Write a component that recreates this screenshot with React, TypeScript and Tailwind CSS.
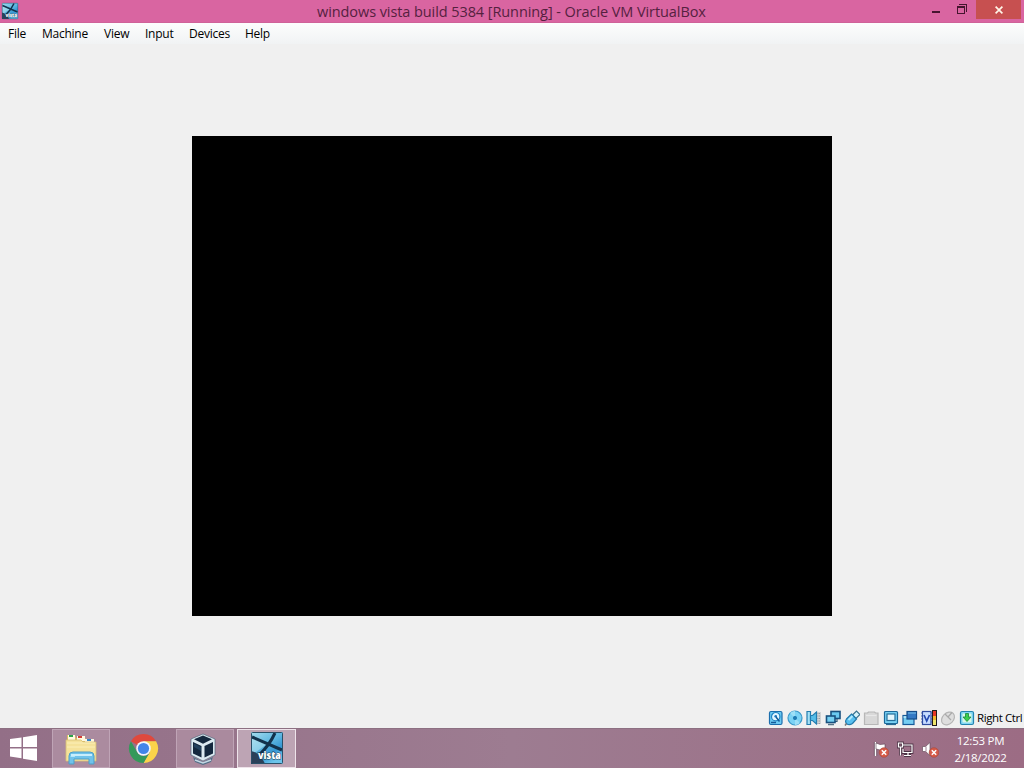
import type { ReactNode } from 'react';

const menuItems = [
  { label: 'File', width: 'w-[34px]' },
  { label: 'Machine', width: 'w-[62px]' },
  { label: 'View', width: 'w-[41px]' },
  { label: 'Input', width: 'w-[44px]' },
  { label: 'Devices', width: 'w-[56px]' },
  { label: 'Help', width: 'w-[40px]' },
];

function VistaIcon({ className }: { className: string }) {
  return (
    <svg viewBox="0 0 32 32" overflow="visible" className={className}>
      <defs>
        <linearGradient id="vista" x1="0" y1="0" x2="0.6" y2="1">
          <stop offset="0" stopColor="#a5dcee" />
          <stop offset="0.45" stopColor="#62b9e2" />
          <stop offset="0.75" stopColor="#3596d2" />
          <stop offset="1" stopColor="#6cc4ea" />
        </linearGradient>
      </defs>
      <rect width="32" height="32" rx="1" fill="url(#vista)" />
      <path d="M1 6L16 12L5 20H1Z" fill="#cdeff5" opacity=".45" />
      <path d="M0 19C6 20 11 25 14 32H0Z" fill="#2a4059" />
      <path d="M1 5L31 18M24 1Q18 14 8 23" stroke="#12314c" strokeWidth="3" fill="none" />
      <rect x=".5" y=".5" width="31" height="31" rx="1" fill="none" stroke="#294f68" />
      <text x="7" y="27" fontFamily="Open Sans, sans-serif" fontSize="10" fontWeight="800" fill="white" stroke="#173148" strokeWidth="1" paintOrder="stroke" textLength="23" lengthAdjust="spacingAndGlyphs">
        vista
      </text>
    </svg>
  );
}

function TitleBar() {
  return (
    <header className="flex h-[23px] items-start border-b border-[#cf6299] bg-[#d965a1]">
      <div className="flex w-[120px] pl-[2px] pt-[3px]">
        <VistaIcon className="h-4 w-4" />
      </div>
      <h1 className="flex-1 whitespace-nowrap pl-[197px] text-[14.5px] leading-[23px] tracking-[-0.08px] text-[#55213f]">
        windows vista build 5384 [Running] - Oracle VM VirtualBox
      </h1>
      <svg viewBox="0 0 48 20" className="h-5 w-12 shrink-0" shapeRendering="crispEdges">
        <path d="M4 11h8v2H4z" fill="#46152f" />
        <path d="M29.5 6.5h7v7h-7zM31 4.5h7.5v7.5" fill="none" stroke="#46152f" />
        <path d="M29 6h8v2h-8z" fill="#46152f" />
      </svg>
      <button type="button" aria-label="Close" className="mr-[3px] flex h-[19px] w-[45px] shrink-0 items-center justify-center bg-[#c75050]">
        <svg viewBox="0 0 8 8" className="h-2 w-2">
          <path d="M.6.6l6.8 6.8M7.4.6L.6 7.4" stroke="#fff6e8" strokeWidth="1.7" />
        </svg>
      </button>
    </header>
  );
}

function StatusIcon({ children }: { children: ReactNode }) {
  return (
    <svg viewBox="0 0 16 16" className="h-4 w-4 shrink-0" strokeWidth="1.2">
      {children}
    </svg>
  );
}

function StatusBar() {
  return (
    <div className="flex h-[20px] items-center gap-[3.1px] pl-[768px]">
      <StatusIcon>
        <rect x="1.5" y="1.5" width="12.5" height="13" rx="1.5" fill="#6ccaf3" stroke="#1b6ead" />
        <circle cx="7.7" cy="6.7" r="4.2" fill="#e3f6ff" stroke="#2386c4" />
        <circle cx="7.7" cy="6.2" r="1.3" fill="#1b76bd" />
        <path d="M8 7l3.5 4.5M3 12.5h5" stroke="#155b98" strokeWidth="1.5" />
      </StatusIcon>
      <StatusIcon>
        <circle cx="8" cy="8" r="7" fill="#7bd3f5" stroke="#3b99c9" />
        <path d="M8 8L3 3A7 7 0 0 1 8 1ZM8 8l5 5a7 7 0 0 1-5 2Z" fill="#9de0f7" />
        <circle cx="8" cy="8" r="1.4" fill="#2583b8" stroke="#1b78b0" />
      </StatusIcon>
      <StatusIcon>
        <path d="M9 2h6v12H9z" fill="#d1d3d5" />
        <path d="M10 3.5h5M10 6h5M10 8.5h5M10 11h5M10 13.5h5" stroke="#999ea3" strokeDasharray="1.5 1" />
        <path d="M1 1.5h3.5v13H1z" fill="#a5e1f6" stroke="#247daf" />
        <path d="M4.5 5.5h2L10.5 2v12l-4-3.5h-2z" fill="#56bee9" stroke="#247daf" />
      </StatusIcon>
      <StatusIcon>
        <rect x="6" y="1.5" width="9" height="7" fill="#6bcaf0" stroke="#18517f" strokeWidth="1.6" />
        <path d="M12 9v2.5h-2" fill="none" stroke="#315b79" />
        <rect x="1.5" y="6" width="8.5" height="6.5" fill="#76d0f2" stroke="#18517f" strokeWidth="1.6" />
        <path d="M3 14.5h6" stroke="#54758a" strokeWidth="1.5" />
      </StatusIcon>
      <StatusIcon>
        <path d="M8.5 5l4-4L16 4.500l-4 4z" fill="#d4f3fb" stroke="#3a728e" />
        <path d="M7.500 4l5 5-4 4.500Q5.500 15.500 3 14 .5 12 2.500 9z" fill="#58bfef" stroke="#227aab" />
        <path d="M4.500 10l4-4" stroke="#afe9fd" strokeWidth="2" />
        <path d="M2.500 13.500L1 15.500" stroke="#777" strokeWidth="1.5" />
      </StatusIcon>
      <StatusIcon>
        <path d="M1.5 3h3l1-1h6l1 1H15v11.5H1.5z" fill="#d8d8d8" stroke="#b7b7b7" />
        <path d="M3 5.5h10.5" stroke="#e8e8e8" />
      </StatusIcon>
      <StatusIcon>
        <rect x="1.5" y="1.5" width="13" height="12" rx="1" fill="#78d0f3" stroke="#1c699a" />
        <rect x="4" y="4" width="8" height="6.5" fill="#e4f7fd" stroke="#246f9b" />
        <path d="M3 14.5h10" stroke="#286992" />
      </StatusIcon>
      <StatusIcon>
        <rect x="1" y="5.5" width="11" height="9" fill="#75cdf2" stroke="#155a99" />
        <path d="M1.5 7h10" stroke="#d4f5ff" />
        <rect x="5" y="1.5" width="9.5" height="7.5" fill="#3479c4" stroke="#164d89" />
        <path d="M6 3h8" stroke="#70b7e5" />
      </StatusIcon>
      <StatusIcon>
        <path d="M0 3h11M0 6h11M0 9h11M0 12h11" stroke="#526bb1" />
        <rect x="1.5" y="1.5" width="8.5" height="13" fill="#c7dcff" stroke="#304ca0" />
        <path d="M3 5l2.7 6L8.5 5" fill="none" stroke="#2448b0" strokeWidth="1.7" />
        <path d="M11 0h5v16h-5z" fill="#201b19" />
        <path d="M12 1h3v5h-3z" fill="#e53525" />
        <path d="M12 6h3v4h-3z" fill="#f3b52a" />
        <path d="M12 10h3v5h-3z" fill="#eee66a" />
      </StatusIcon>
      <StatusIcon>
        <ellipse cx="8" cy="8.5" rx="5.5" ry="7.3" transform="rotate(45 8 8.5)" fill="#dedede" stroke="#b5b5b5" />
        <path d="M5 4l6 6M8 7l4-4.5" stroke="#aaa" fill="none" />
      </StatusIcon>
      <StatusIcon>
        <rect x="1.5" y="1.5" width="13" height="13" rx="1.5" fill="#82d7f5" stroke="#2384af" />
        <rect x="3.5" y="3.5" width="9" height="9" rx="1" fill="#d9f9e4" />
        <path d="M6.5 3.5h3V7h2.5L8 11.5 4 7h2.5z" fill="#3bce4c" stroke="#15863b" strokeWidth=".8" />
      </StatusIcon>
      <span className="-ml-px whitespace-nowrap text-[11.5px] tracking-[-0.4px]">Right Ctrl</span>
    </div>
  );
}

function ExplorerIcon() {
  return (
    <svg viewBox="0 0 34 32" className="h-8 w-[34px]">
      <path d="M3 6V2h8l1 3h8l8 3v4H3z" fill="#dcbd61" />
      <path d="M4 2h7v6H4zM13 3h8v5h-8zM21 6h9v4h-9z" fill="#fff9df" />
      <path d="M5 2h4v2H5z" fill="#2ba24b" />
      <path d="M14 3h4v2h-4z" fill="#d33c35" />
      <path d="M23 6h4v2h-4z" fill="#3686c8" />
      <path d="M2 7h15l2 2h13v19H2z" fill="#f5e29a" stroke="#d8c077" strokeWidth=".8" />
      <path d="M3 10h28M3 14h28" stroke="#fff5c6" opacity=".7" />
      <path d="M5 31v-8q0-4 4-4h17q4 0 4 4v8h-5v-5H10v5z" fill="#70c3ea" stroke="#4c9fc9" />
      <path d="M7 22h21" stroke="#d9f6ff" strokeWidth="1.7" />
      <path d="M6 24l4-3 1 3" fill="#c4f0ff" opacity=".8" />
    </svg>
  );
}

function ChromeIcon() {
  return (
    <svg viewBox="0 0 32 32" className="h-[31px] w-[31px]">
      <path d="M16 16L3 8.5A15 15 0 0 1 29 8.5H16z" fill="#df493d" />
      <path d="M16 8.5h13A15 15 0 0 1 16 31l6.5-11.5z" fill="#fbd34a" />
      <path d="M3 8.5l6.5 11.25A7.5 7.5 0 0 0 22.5 19.75L16 31A15 15 0 0 1 3 8.5z" fill="#34995a" />
      <circle cx="16" cy="16" r="7.5" fill="#f2f6fb" />
      <circle cx="16" cy="16" r="5.8" fill="#4285e8" />
    </svg>
  );
}

function VirtualBoxIcon() {
  return (
    <svg viewBox="0 0 32 32" className="h-8 w-8">
      <path d="M6 24l10 5 10-5-2 5-8 3-8-3z" fill="#536f88" />
      <path d="M8 27l8 3 8-3" fill="none" stroke="#c3d7e3" strokeWidth="1.4" />
      <path d="M16 1l12 5v16l-12 6-12-6V6z" fill="#dceaf1" stroke="#405c72" strokeWidth=".6" />
      <path d="M16 2.5l9 3.8-9 4.4-9-4.4zM6 9l8.5 4v11.5L6 20.5zM17.5 13L26 9v11.5l-8.5 4z" fill="#14283e" />
      <path d="M7 10.5l7 3.5v4l-7-4z" fill="#22415e" />
    </svg>
  );
}

function ErrorBadge() {
  return (
    <>
      <circle cx="12" cy="11.5" r="4.8" fill="#d65a48" stroke="#a8483d" strokeWidth=".6" />
      <path d="M9.8 9.3l4.4 4.4m0-4.4l-4.4 4.4" stroke="#fff" strokeWidth="1.5" />
    </>
  );
}

function Taskbar() {
  return (
    <footer className="flex h-10 items-center border-t border-[#8d7082] bg-linear-to-r from-[#936f87] via-[#9d7c91] to-[#9c6c84]">
      <button type="button" aria-label="Start" className="flex h-full w-[52px] items-center pb-px pl-[10px]">
        <svg viewBox="0 0 28 26" className="h-[26px] w-7" fill="#fff">
          <path d="M0 4l11.5-1.6V12H0zM13 2.2L27 0v12H13zM0 13.5h11.5v9.8L0 21.6zM13 13.5h14V26l-14-2.2z" />
        </svg>
      </button>
      <div className="flex h-full w-[58px] items-center justify-center border border-[#bfa4b6] bg-[#ab8b9f]">
        <ExplorerIcon />
      </div>
      <div className="flex h-full w-[66px] items-center justify-center">
        <ChromeIcon />
      </div>
      <div className="flex h-full w-[58px] items-center justify-center border border-[#bfa4b6] bg-[#aa8a9e] pr-[5px]">
        <VirtualBoxIcon />
      </div>
      <div className="ml-[3px] flex h-full w-[59px] items-center justify-center border border-[#eee3ea] bg-[#bda4b4] pb-[2px]">
        <VistaIcon className="h-8 w-8" />
      </div>
      <div className="ml-auto flex h-full items-center gap-2 pr-[17px] pt-px">
        <svg viewBox="0 0 17 17" className="h-[17px] w-[17px]">
          <path d="M3.5 1v14" stroke="#5d4053" strokeWidth="3.2" />
          <path d="M3.5 1v14" stroke="#fff" strokeWidth="1.6" />
          <path d="M4 2l4 1.5 5-.5v6L8 9 4 8z" fill="#fff" stroke="#5d4053" strokeWidth=".6" />
          <ErrorBadge />
        </svg>
        <svg viewBox="0 0 17 17" className="h-[17px] w-[17px]" fill="none">
          <path d="M6 4h9v7.5H6V8m5 3.5v3M7 14.5h7M3.5 6v8.5M1.5 2h4v4h-4z" stroke="#4e3446" strokeWidth="2.8" />
          <path d="M6 4h9v7.5H6V8m5 3.5v3M7 14.5h7M3.5 6v8.5M1.5 2h4v4h-4z" stroke="#fff" strokeWidth="1.2" />
        </svg>
        <svg viewBox="0 0 17 17" className="h-[17px] w-[17px]">
          <path d="M.5 5.5h3l4.5-4v13l-4.5-4h-3z" fill="#fff" stroke="#6b5060" strokeWidth=".7" />
          <path d="M4 5.5v5" stroke="#9c8493" />
          <ErrorBadge />
        </svg>
        <div className="ml-[7px] w-[53px] whitespace-nowrap text-center text-[11.5px] leading-[17px] tracking-[-0.25px] text-white">
          <div>12:53 PM</div>
          <div>2/18/2022</div>
        </div>
      </div>
    </footer>
  );
}

function App() {
  return (
    <div className="flex h-[768px] w-[1024px] flex-col overflow-hidden bg-[#f0f0f0] font-['Open_Sans','Noto_Sans',sans-serif] text-black">
      <TitleBar />
      <nav className="flex h-[21px] bg-linear-to-b from-[#fcfdfd] to-[#f1f3f4] pl-2 text-[12px] leading-[22px] tracking-[-0.25px]">
        {menuItems.map((item) => (
          <div key={item.label} className={`${item.width} shrink-0 whitespace-nowrap`}>
            {item.label}
          </div>
        ))}
      </nav>
      <main className="flex h-[664px] justify-center pt-[92px]">
        <div className="h-[480px] w-[640px] bg-black" />
      </main>
      <StatusBar />
      <Taskbar />
    </div>
  );
}

export default App;
